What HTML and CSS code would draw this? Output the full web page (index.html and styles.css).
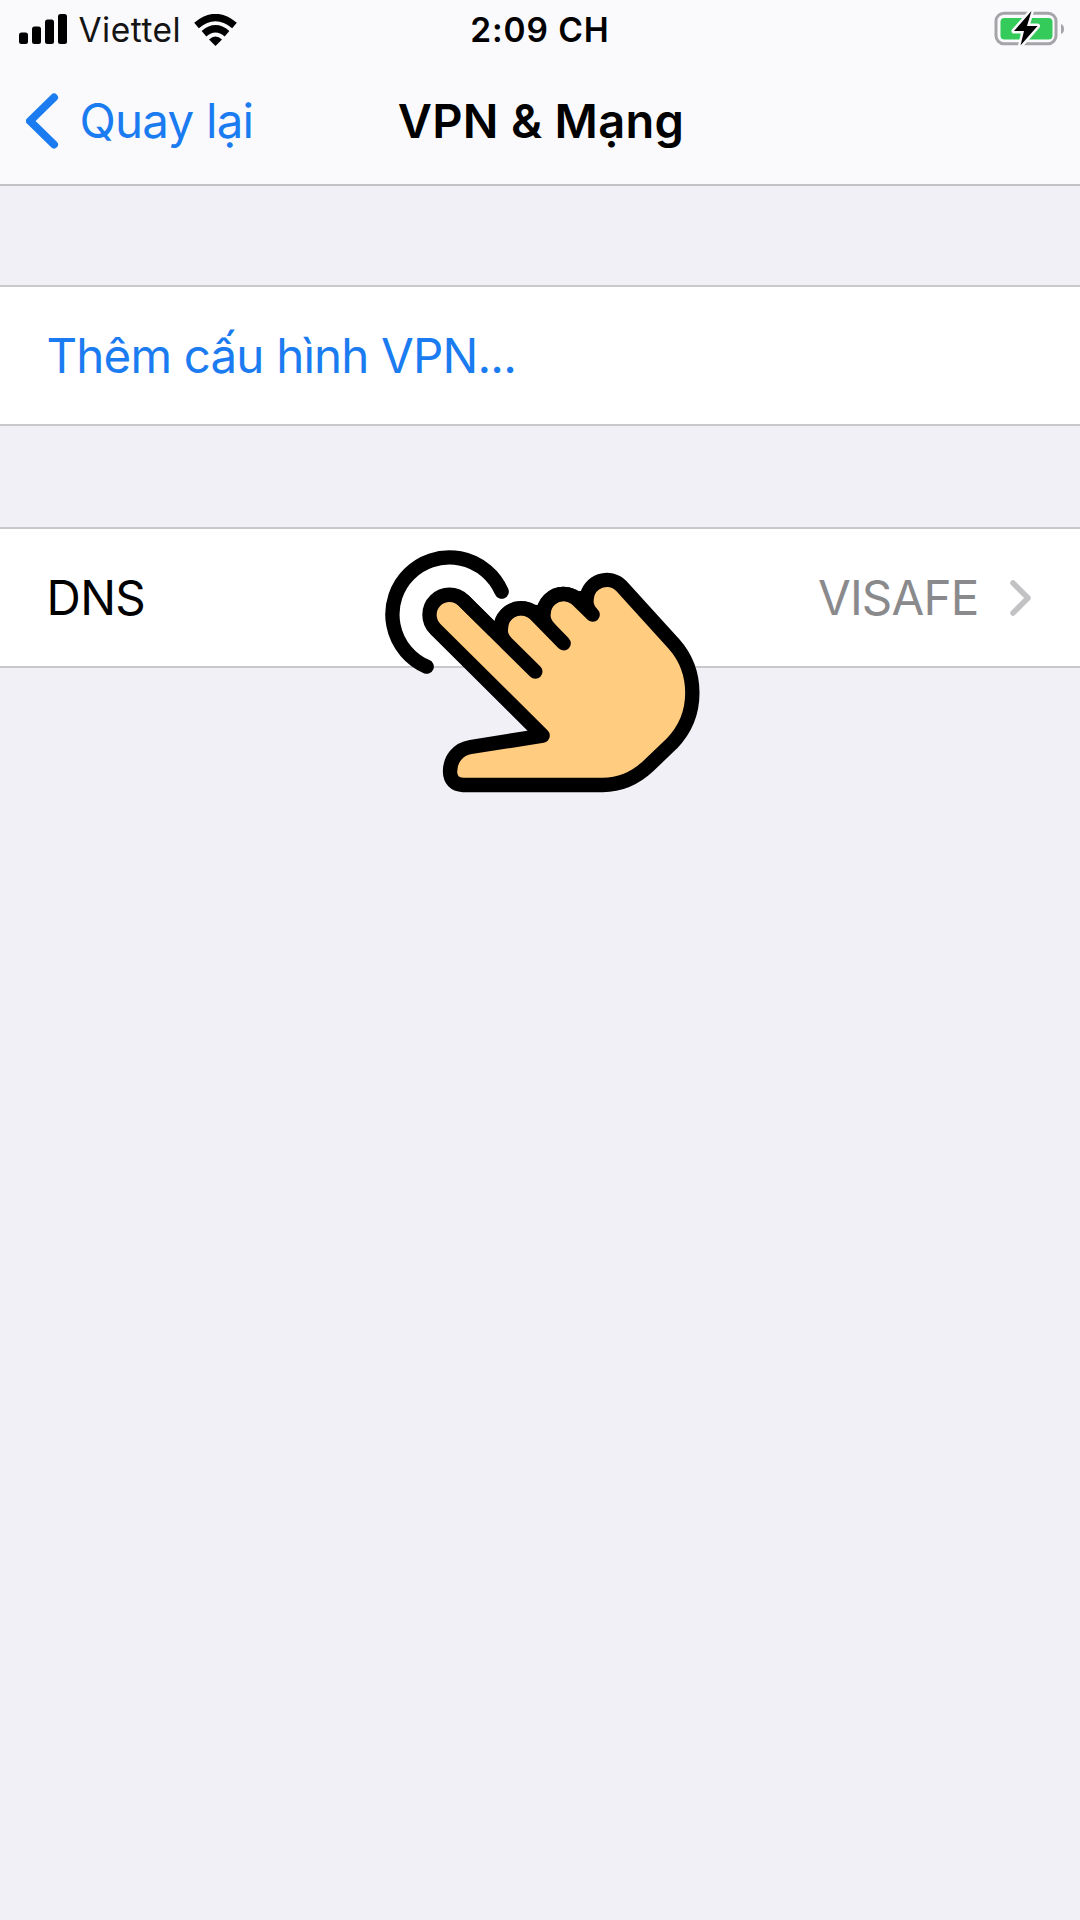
FILE: index.html
```html
<!DOCTYPE html>
<html lang="vi">
<head>
<meta charset="utf-8">
<title>VPN &amp; Mạng</title>
<link rel="stylesheet" href="styles.css">
</head>
<body>
<header class="header">
  <div class="status">
    <div class="carrier">
      <svg class="signal" viewBox="0 0 49 32" aria-hidden="true"><rect x="0" y="19.5" width="9" height="11.5" rx="2.5"/><rect x="13" y="13.5" width="9" height="17.5" rx="2.5"/><rect x="26" y="6.5" width="9" height="24.5" rx="2.5"/><rect x="39" y="1" width="9" height="30" rx="2.5"/></svg>
      <span class="carrier-name">Viettel</span>
      <svg class="wifi" viewBox="0 0 43 32" aria-hidden="true"><path d="M2.5 11.5Q21.5-4.500 40.5 11.5M10 19.7Q21.5 10 33 19.7"/><path class="dot" d="M15 25.500Q21.5 19.500 28 25.500L21.5 32Z"/></svg>
    </div>
    <span class="time">2:09 CH</span>
    <svg class="battery" viewBox="0 0 72 40" aria-hidden="true"><rect class="shell" x="2" y="5.2" width="60" height="30.5" rx="8"/><path class="cap" d="M67 16Q70 17 70 21T67 26Z"/><rect class="charge" x="6.5" y="10" width="52" height="21.5" rx="4"/><path class="bolt" d="M37.5 3L20 23h10L26.5 37.5 43.5 18H33Z"/></svg>
  </div>
  <nav class="nav">
    <a class="back">
      <svg class="back-arrow" viewBox="0 0 34 56" aria-hidden="true"><path d="M28 4.5L4 28 28 51.5"/></svg>
      <span class="back-label">Quay lại</span>
    </a>
    <h1 class="title">VPN &amp; Mạng</h1>
  </nav>
</header>
<main class="settings">
  <section class="row"><span class="add">Thêm cấu hình VPN...</span></section>
  <section class="row">
    <span class="name">DNS</span>
    <span class="value">VISAFE</span>
    <svg class="more" viewBox="0 0 22 36" aria-hidden="true"><path d="M3 3L18 18 3 33"/></svg>
  </section>
</main>
<svg class="pointer" viewBox="0 0 1080 840" aria-hidden="true">
  <path class="ring" d="M425 185A171 171 0 1 0 200 410"/>
  <path class="hand" d="M311 212A60 60 0 1 0 226 297L548 617 332 651C294 657 270 687 270 725Q271 763 309 765H728Q804 765 865 708L935 641Q997 577 997 489 997 404 942 342L784 168A61 61 0 0 0 680 204Q650 207 638 198A61 61 0 0 0 551 247Q531 248 516 244A61 61 0 0 0 423 295L400 300Z"/>
  <path class="ring" d="M311 212L526 425 440 340A60 60 0 1 1 525 252L611 340 568 295A60 60 0 1 1 652 209L698 254Q679 237 679 211"/>
</svg>
</body>
</html>
```
FILE: styles.css
```css
* { box-sizing: border-box; }
body { margin: 0; min-height: 1920px; background: #f0f0f6; color: #000; font-family: Inter, "Noto Sans", sans-serif; font-size: 47.5px; line-height: 58px; }
span, h1 { white-space: nowrap; }
.header { height: 186px; background: #fafafd; border-bottom: 2px solid #c3c3c6; }
.status { height: 58px; display: grid; grid-template-columns: 1fr auto 1fr; align-items: center; padding: 0 14px; font-size: 33.5px; }
.carrier { display: flex; align-items: center; padding-left: 4.5px; }
.signal { width: 49px; height: 32px; margin: -1px 11px 0 0; }
.carrier-name { letter-spacing: .5px; color: #141414; }
.wifi { width: 43px; height: 32px; margin-left: 13px; fill: none; stroke: #000; stroke-width: 7.2; }
.wifi .dot { fill: #000; stroke: none; }
.time { font-weight: 600; letter-spacing: .9px; padding-top: 1px; }
.battery { width: 72px; height: 40px; justify-self: end; margin-top: -4px; }
.shell { fill: none; stroke: #a5a5a9; stroke-width: 3; }
.cap { fill: #a5a5a9; }
.charge { fill: #35cb5b; }
.bolt { fill: #000; stroke: #fafafd; stroke-width: 5; stroke-linejoin: round; paint-order: stroke; }
.nav { height: 126px; display: grid; grid-template-columns: 1fr auto 1fr; align-items: start; padding: 34px 24px 0 26px; }
.back { display: flex; align-items: center; color: #1a7cf0; }
.back-arrow { width: 34px; height: 56px; fill: none; stroke: currentColor; stroke-width: 8; stroke-linecap: round; stroke-linejoin: round; }
.back-label { margin-left: 19.5px; letter-spacing: -.8px; }
.title { margin: 0; font-size: 47px; font-weight: 600; line-height: 58px; letter-spacing: .3px; }
.settings { display: flex; flex-direction: column; gap: 101px; padding-top: 99px; }
.row { height: 141px; display: flex; align-items: center; padding: 0 48px 0 46.5px; background: #fff; border: solid #c9c9cc; border-width: 2px 0; }
.add { color: #1a7cf0; letter-spacing: -.83px; }
.name { flex: 1; letter-spacing: -.6px; }
.value { color: #8a8a8d; letter-spacing: -.8px; }
.more { width: 22px; height: 36px; margin-left: 31.5px; fill: none; stroke: #c2c2c5; stroke-width: 5.5; stroke-linecap: round; stroke-linejoin: round; }
.pointer { position: absolute; left: 360px; top: 530px; width: 360px; height: 280px; }
.ring, .hand { stroke: #000; stroke-width: 43; stroke-linecap: round; stroke-linejoin: round; }
.ring { fill: none; }
.hand { fill: #ffcc80; }
```
